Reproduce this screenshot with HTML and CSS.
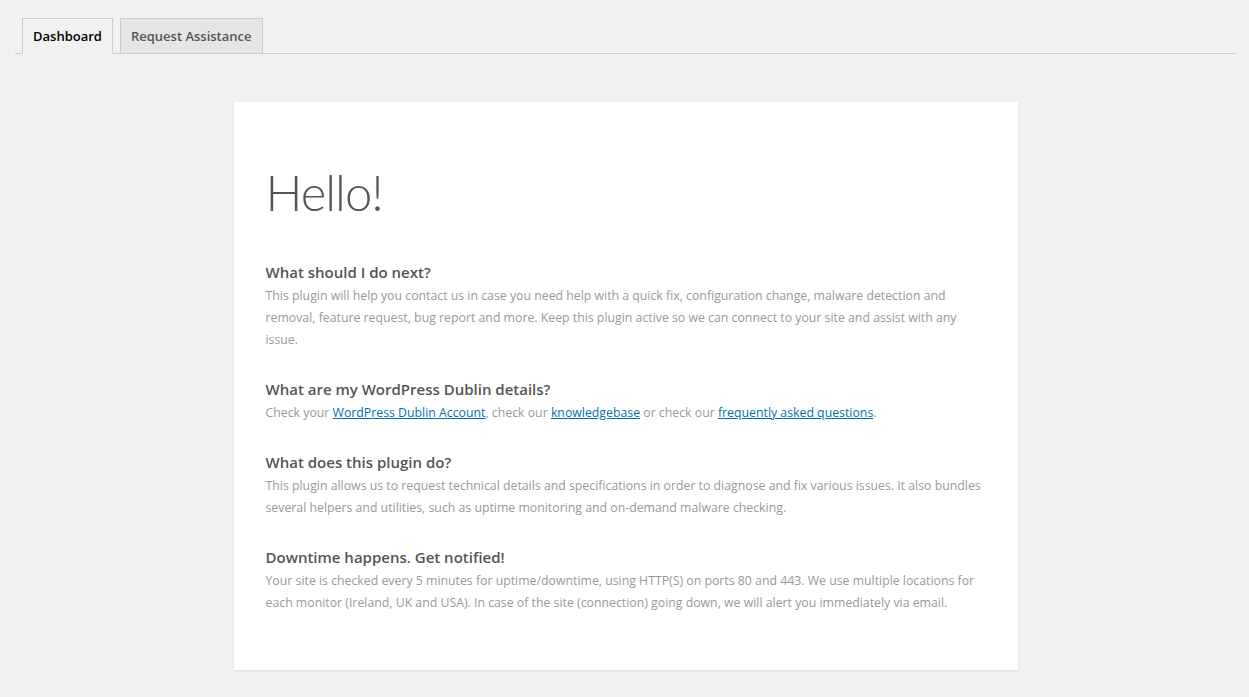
FILE: index.html
```html
<!DOCTYPE html>
<html lang="en">
<head>
    <meta charset="UTF-8">
    <title>Dashboard</title>
    <link rel="stylesheet" href="styles.css">
</head>
<body>
    <div class="wrap">
        <nav class="nav-tabs">
            <a class="nav-tab active" href="#">Dashboard</a>
            <a class="nav-tab" href="#">Request Assistance</a>
        </nav>

        <div class="card">
            <h1>Hello!</h1>

            <div class="section">
                <h3>What should I do next?</h3>
                <p>This plugin will help you contact us in case you need help with a quick fix, configuration change, malware detection and removal, feature request, bug report and more. Keep this plugin active so we can connect to your site and assist with any issue.</p>
            </div>

            <div class="section">
                <h3>What are my WordPress Dublin details?</h3>
                <p>Check your <a href="#">WordPress Dublin Account</a>, check our <a href="#">knowledgebase</a> or check our <a href="#">frequently asked questions</a>.</p>
            </div>

            <div class="section">
                <h3>What does this plugin do?</h3>
                <p>This plugin allows us to request technical details and specifications in order to diagnose and fix various issues. It also bundles several helpers and utilities, such as uptime monitoring and on-demand malware checking.</p>
            </div>

            <div class="section">
                <h3>Downtime happens. Get notified!</h3>
                <p>Your site is checked every 5 minutes for uptime/downtime, using HTTP(S) on ports 80 and 443. We use multiple locations for each monitor (Ireland, UK and USA). In case of the site (connection) going down, we will alert you immediately via email.</p>
            </div>
        </div>
    </div>
</body>
</html>
```

FILE: styles.css
```css
body {
    margin: 0;
    background: #f1f1f1;
    font-family: "Open Sans", "Noto Sans", sans-serif;
    font-size: 13px;
    color: #444;
}
.wrap {
    padding: 18px 13px 27px 15px;
}
.nav-tabs {
    display: flex;
    gap: 7px;
    padding-left: 7px;
    border-bottom: 1px solid #ccc;
}
.nav-tab {
    display: block;
    padding: 0 10px;
    height: 34px;
    line-height: 34px;
    margin-bottom: -1px;
    border: 1px solid #ccc;
    border-bottom: none;
    background: #e5e5e5;
    color: #555;
    font-size: 13px;
    font-weight: 600;
    text-decoration: none;
}
.nav-tab.active {
    background: #f1f1f1;
    color: #000;
    border-bottom: 1px solid #f1f1f1;
}
.card {
    width: 720px;
    margin: 48px auto 0;
    padding: 55px 32px 56px;
    background: #fff;
    box-shadow: 0 1px 2px rgba(0,0,0,0.08);
}
h1 {
    margin: 0 0 34px;
    font-family: Lato, "Open Sans", sans-serif;
    font-size: 49px;
    font-weight: 300;
    letter-spacing: -1px;
    line-height: 70px;
    color: #555;
}
.section {
    margin-bottom: 27px;
}
.section:last-child {
    margin-bottom: 0;
}
h3 {
    margin: 0 0 2px;
    font-size: 15px;
    font-weight: 600;
    line-height: 22px;
    color: #555;
}
p {
    margin: 0;
    font-size: 12.3px;
    line-height: 22px;
    color: #999;
}
p a {
    color: #0073aa;
}
```
